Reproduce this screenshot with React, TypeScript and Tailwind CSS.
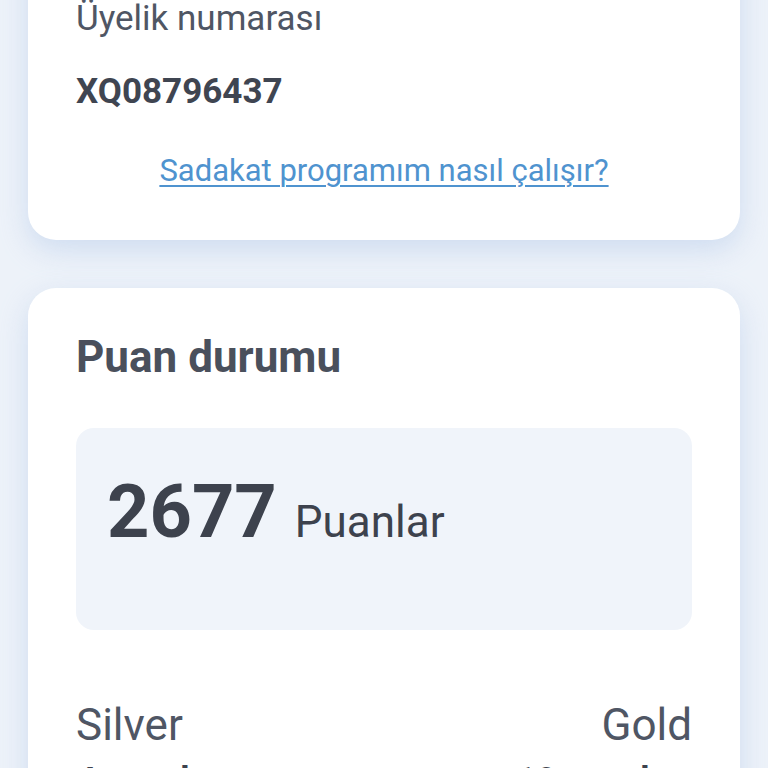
import React from "react";

export default function App() {
  return (
    <div className="h-[768px] w-[768px] overflow-hidden bg-[#edf2f9] font-['Roboto',sans-serif]">
      <div className="-mt-[60px] flex flex-col gap-[48px] px-[28px]">
        <div className="rounded-[28px] bg-white px-[48px] pb-[49px] pt-[59px] shadow-[0_10px_28px_rgba(170,195,230,0.45)]">
          <div className="text-[35px] leading-[40px] text-[#4f5664]">Üyelik numarası</div>
          <div className="mt-[31px] text-[35px] font-bold leading-[44px] text-[#3f4551]">XQ08796437</div>
          <div className="mt-[37px] text-center text-[31px] leading-[40px] text-[#4f93cf] underline decoration-[1.5px] underline-offset-[4px]">
            Sadakat programım nasıl çalışır?
          </div>
        </div>
        <div className="rounded-[28px] bg-white px-[48px] pt-[43px] pb-[80px] shadow-[0_10px_28px_rgba(170,195,230,0.45)]">
          <div className="text-[44px] font-bold leading-[52px] text-[#4a505c]">Puan durumu</div>
          <div className="mt-[45px] flex h-[202px] items-center rounded-[18px] bg-[#f0f4fa] px-[31px] pb-[34px]">
            <div className="flex items-baseline gap-[18px]">
              <span className="text-[74px] font-bold leading-[80px] text-[#3d424d]">2677</span>
              <span className="text-[44px] leading-[52px] text-[#3d424d]">Puanlar</span>
            </div>
          </div>
          <div className="mt-[69px] flex justify-between text-[44px] leading-[52px] text-[#4f5664]">
            <span>Silver</span>
            <span>Gold</span>
          </div>
          <div className="mt-[8px] flex justify-between text-[36px] font-bold leading-[44px] text-[#3d424d]">
            <span>4 seyahat</span>
            <span>10 seyahat</span>
          </div>
        </div>
      </div>
    </div>
  );
}
